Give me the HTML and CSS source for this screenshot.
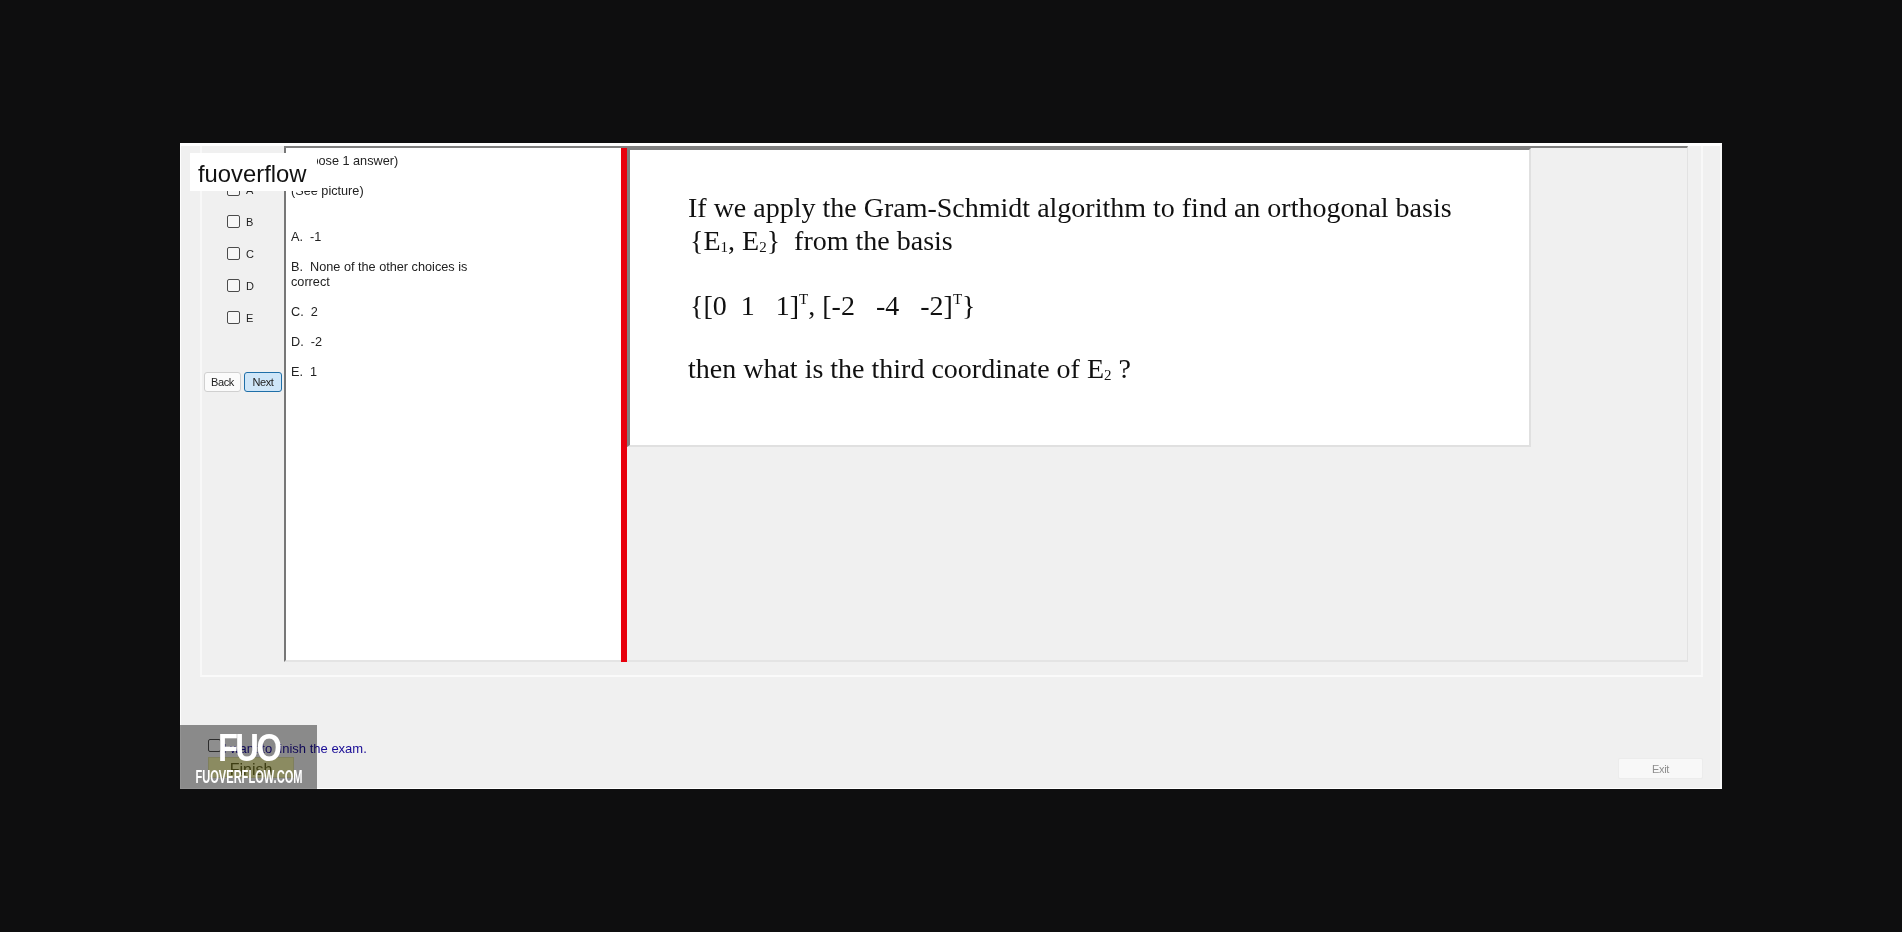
FILE: index.html
```html
<!DOCTYPE html>
<html lang="en">
<head>
    <meta charset="UTF-8">
    <title>Exam</title>
    <link rel="stylesheet" href="styles.css">
</head>
<body>
    <div class="window">
        <div class="group">
            <div class="sidebar">
                <div class="choices">
                    <label class="choice"><input type="checkbox"><span>A</span></label>
                    <label class="choice"><input type="checkbox"><span>B</span></label>
                    <label class="choice"><input type="checkbox"><span>C</span></label>
                    <label class="choice"><input type="checkbox"><span>D</span></label>
                    <label class="choice"><input type="checkbox"><span>E</span></label>
                </div>
                <div class="nav">
                    <button class="nav-btn">Back</button>
                    <button class="nav-btn nav-next">Next</button>
                </div>
            </div>
            <div class="panel">
                <div class="answers">
                    <div class="hint">(Choose 1 answer)</div>
                    <div class="see">(See picture)</div>
                    <div class="answer first">A.&nbsp; -1</div>
                    <div class="answer">B.&nbsp; None of the other choices is<br>correct</div>
                    <div class="answer">C.&nbsp; 2</div>
                    <div class="answer">D.&nbsp; -2</div>
                    <div class="answer">E.&nbsp; 1</div>
                </div>
                <div class="splitter"></div>
                <div class="viewer">
                    <div class="picture">
                        <p>If we apply the Gram-Schmidt algorithm to find an orthogonal basis</p>
                        <p class="brace">{E<sub>1</sub>, E<sub>2</sub>}&nbsp; from the basis</p>
                        <p class="brace gap">{[0&nbsp; 1 &nbsp; 1]<sup>T</sup>, [-2 &nbsp; -4 &nbsp; -2]<sup>T</sup>}</p>
                        <p class="gap last">then what is the third coordinate of E<sub>2</sub> ?</p>
                    </div>
                </div>
            </div>
        </div>
        <div class="footer">
            <div class="finish-box">
                <label class="finish-check"><input type="checkbox"><span>I want to finish the exam.</span></label>
                <button class="finish-btn">Finish</button>
            </div>
            <button class="exit-btn">Exit</button>
        </div>

        <div class="brand-label">fuoverflow</div>
        <div class="watermark">
            <div class="wm-logo">FUO</div>
            <div class="wm-site">FUOVERFLOW.COM</div>
        </div>
    </div>
</body>
</html>
```

FILE: styles.css
```css
html, body {
    height: 100%;
}
body {
    margin: 0;
    background-color: #0e0e0f;
    display: flex;
    justify-content: center;
    align-items: center;
    overflow: hidden;
    font-family: "Liberation Sans", Arial, sans-serif;
}
.window {
    position: relative;
    box-sizing: border-box;
    width: 1542px;
    height: 646px;
    background-color: #f0f0f0;
    border-top: 3px solid #fff;
    border-left: 1px solid #fff;
    border-right: 2px solid #f8f8f8;
    border-bottom: 1px solid #fff;
    display: flex;
    flex-direction: column;
}
.group {
    box-sizing: border-box;
    width: 1503px;
    height: 531px;
    margin-left: 19px;
    padding: 0 13px 13px 0;
    border-left: 2px solid #f8f8f8;
    border-right: 2px solid #f8f8f8;
    border-bottom: 2px solid #fafafa;
    display: flex;
}
.sidebar {
    width: 82px;
    flex: none;
    display: flex;
    flex-direction: column;
}
.choices {
    padding: 37px 0 0 25px;
    display: flex;
    flex-direction: column;
    gap: 19px;
}
.choice {
    display: flex;
    align-items: center;
    gap: 6px;
    height: 13px;
    font-size: 11px;
    color: #222;
}
input[type="checkbox"] {
    appearance: none;
    box-sizing: border-box;
    flex: none;
    width: 13px;
    height: 13px;
    margin: 0;
    background: #f7f7f7;
    border: 1px solid #4c4c4c;
    border-radius: 2px;
}
.nav {
    margin-top: 48px;
    margin-left: 2px;
    display: flex;
    gap: 3px;
}
.nav-btn {
    box-sizing: border-box;
    width: 37px;
    height: 20px;
    padding: 0;
    background: #fbfbfb;
    border: 1px solid #d0d0d0;
    border-radius: 3px;
    font-family: "Liberation Sans", Arial, sans-serif;
    font-size: 11px;
    letter-spacing: -0.4px;
    color: #222;
}
.nav-next {
    width: 38px;
    background: #cfe6f8;
    border-color: #1f6fa8;
}
.panel {
    flex: 1;
    display: flex;
    border-top: 2px solid #808080;
    border-right: 1px solid #e2e2e2;
}
.answers {
    box-sizing: border-box;
    width: 337px;
    flex: none;
    padding: 6px 0 0 5px;
    background: #fff;
    border-left: 2px solid #777;
    border-bottom: 2px solid #e4e4e4;
    font-size: 12.7px;
    color: #222;
}
.hint {
    line-height: 14px;
}
.see {
    margin-top: 16px;
    line-height: 14px;
}
.answer {
    margin-top: 15px;
    line-height: 15px;
}
.answer.first {
    margin-top: 32px;
}
.splitter {
    width: 6px;
    flex: none;
    background: #e8000d;
}
.viewer {
    flex: 1;
    border-bottom: 2px solid #e4e4e4;
}
.picture {
    box-sizing: border-box;
    width: 904px;
    height: 299px;
    padding: 41px 0 0 58px;
    background: #fff;
    border-top: 2px solid #808080;
    border-left: 3px solid #808080;
    border-right: 2px solid #e0e0e0;
    border-bottom: 2px solid #e0e0e0;
    font-family: "Liberation Serif", "Times New Roman", serif;
    font-size: 28px;
    line-height: 33px;
    color: #111;
}
.picture p {
    margin: 0;
}
.picture p.brace {
    padding-left: 2px;
}
.picture p.gap {
    margin-top: 32px;
}
.picture p.last {
    margin-top: 30px;
}
.picture sub, .picture sup {
    font-size: 15px;
    line-height: 0;
}
.picture sub {
    vertical-align: -2px;
}
.picture sup {
    vertical-align: 11px;
}
.footer {
    flex: 1;
    display: flex;
    justify-content: space-between;
    align-items: flex-end;
    padding: 0 17px 9px 27px;
}
.finish-box {
    display: flex;
    flex-direction: column;
    gap: 5px;
    margin-bottom: 1px;
}
.finish-check {
    display: flex;
    align-items: flex-start;
    gap: 2px;
    height: 13px;
    font-size: 13px;
    line-height: 13px;
    color: #1a0d96;
}
.finish-check span {
    padding-top: 3px;
}
.finish-btn {
    box-sizing: border-box;
    width: 86px;
    height: 21px;
    padding: 3px 0 0;
    background: #f2f2a8;
    border: 1px solid #dcdca0;
    font-family: "Liberation Sans", Arial, sans-serif;
    font-size: 16px;
    color: #6a6a20;
}
.exit-btn {
    box-sizing: border-box;
    width: 85px;
    height: 21px;
    padding: 0;
    background: #f8f8f8;
    border: 1px solid #ececec;
    border-radius: 2px;
    font-family: "Liberation Sans", Arial, sans-serif;
    font-size: 11px;
    letter-spacing: -0.3px;
    color: #8e8e8e;
}
.brand-label {
    position: absolute;
    left: 9px;
    top: 7px;
    width: 127px;
    height: 38px;
    box-sizing: border-box;
    padding: 2px 0 0 8px;
    background: #fff;
    font-size: 23.8px;
    line-height: 38px;
    color: #111;
}
.watermark {
    position: absolute;
    left: -1px;
    bottom: -1px;
    width: 137px;
    height: 64px;
    color: #fff;
    font-weight: bold;
    display: flex;
    flex-direction: column;
    align-items: center;
}
.watermark::before {
    content: "";
    position: absolute;
    inset: 0;
    background: #939393;
    mix-blend-mode: multiply;
}
.wm-logo {
    position: relative;
    margin-top: 4px;
    font-size: 38px;
    line-height: 38px;
    letter-spacing: -3px;
    transform: scaleX(0.86);
}
.wm-site {
    position: relative;
    margin-top: 1px;
    font-size: 18px;
    line-height: 18px;
    white-space: nowrap;
    transform: scaleX(0.615);
}
```
